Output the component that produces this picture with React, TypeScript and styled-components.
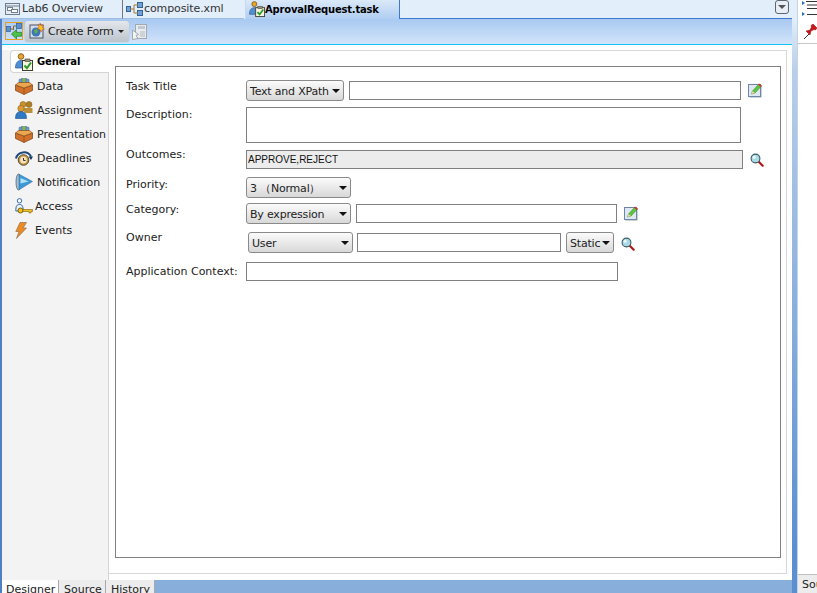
import React from "react";
import styled, { createGlobalStyle } from "styled-components";

const GlobalStyle = createGlobalStyle`
  html, body {
    margin: 0;
    padding: 0;
    background: #fff;
    overflow: hidden;
  }
  body {
    font-family: "DejaVu Sans", sans-serif;
    font-size: 11px;
    color: #111;
  }
`;

function TaskIcon() {
  return (
    <svg width="18" height="18" viewBox="0 0 18 18">
      <circle cx="6" cy="3.500" r="2.800" fill="#e8a52c" stroke="#6e4a0c" strokeWidth="0.8" />
      <path d="M0.500 15c0-5 2-7.500 5.500-7.500s5.500 2.500 5.500 7.500z" fill="#4f8fd6" stroke="#2a5a94" strokeWidth="0.7" />
      <rect x="7.500" y="7.500" width="10" height="10" fill="#f6f3df" stroke="#3f3f30" />
      <rect x="10" y="6" width="5" height="2.500" fill="#9a9680" stroke="#3f3f30" strokeWidth="0.6" />
      <path d="M9.500 12.500l2.400 2.600L16 9.500" fill="none" stroke="#2a9a2e" strokeWidth="2" />
    </svg>
  );
}

function BoxIcon() {
  return (
    <svg width="18" height="17" viewBox="0 0 18 17">
      <path d="M4 1.500l3-1v6H4z" fill="#6d9cc9" stroke="#44688c" strokeWidth="0.5" />
      <path d="M7 .5h4v6H7z" fill="#86b46e" stroke="#4e7a40" strokeWidth="0.5" />
      <path d="M11 .5l3 1v5h-3z" fill="#6d9cc9" stroke="#44688c" strokeWidth="0.5" />
      <path d="M.5 7l8.500 3 8.500-3v5.500L9 16.500.5 12.500z" fill="#d0702a" stroke="#7e3f10" strokeWidth="0.7" />
      <path d="M.5 7l3-2.500h11l3 2.500L9 10z" fill="#eca650" stroke="#7e3f10" strokeWidth="0.6" />
      <path d="M9 10v6.500" stroke="#8c4a16" strokeWidth="0.7" />
    </svg>
  );
}

function AssignIcon() {
  return (
    <svg width="18" height="18" viewBox="0 0 18 18">
      <circle cx="8" cy="3.500" r="3" fill="#c9922e" stroke="#7d5a16" strokeWidth="0.5" />
      <circle cx="14" cy="3.500" r="3" fill="#ad8028" stroke="#7d5a16" strokeWidth="0.5" />
      <path d="M7 7h10.500v5H10z" fill="#bd8e38" />
      <circle cx="6" cy="7.500" r="3.200" fill="#d99a34" stroke="#7d5a16" strokeWidth="0.5" />
      <path d="M.5 17.500c0-5 2-7 5.500-7s5.500 2 5.500 7z" fill="#2f78c4" stroke="#1c4f88" strokeWidth="0.6" />
    </svg>
  );
}

function ClockIcon() {
  return (
    <svg width="18" height="16" viewBox="0 0 18 16">
      <path d="M1 8.500a8 7.500 0 0 1 15-2" fill="none" stroke="#1f4a78" strokeWidth="2" />
      <path d="M13.500 6.500h4.500l-2 3.500z" fill="#143658" />
      <circle cx="8.500" cy="10" r="5.300" fill="#c89336" stroke="#333" strokeWidth="0.8" />
      <circle cx="8.500" cy="10" r="3.400" fill="#f3e4c0" />
      <path d="M8.500 8v2.500h2" fill="none" stroke="#333" />
    </svg>
  );
}

function SpeakerIcon() {
  return (
    <svg width="18" height="18" viewBox="0 0 18 18">
      <ellipse cx="3.500" cy="9" rx="2.500" ry="8" fill="#a8bdd0" stroke="#3f5870" strokeWidth="0.7" />
      <path d="M4 1.200L17.500 8.500 4 16.800z" fill="#3c98d8" stroke="#2a6494" strokeWidth="0.5" />
      <path d="M5.500 5l8 3.500-8 2z" fill="#b4e0f8" />
    </svg>
  );
}

function AccessIcon() {
  return (
    <svg width="18" height="17" viewBox="0 0 18 17">
      <circle cx="4.500" cy="2.800" r="2.200" fill="#fff" stroke="#3468a8" />
      <path d="M.8 13c0-5 1-6.500 3.700-6.500S8.200 8 8.200 13z" fill="#e8f0fa" stroke="#3468a8" />
      <circle cx="5.500" cy="12.500" r="2.500" fill="#f0c020" stroke="#7e6006" />
      <path d="M8 11.500h9.500v2H16v1.500h-2v-1.500H8z" fill="#f0c020" stroke="#7e6006" strokeWidth="0.6" />
    </svg>
  );
}

function BoltIcon() {
  return (
    <svg width="12" height="17" viewBox="0 0 12 17">
      <path d="M5 .5h6.500L8 6h3.500L1.500 16.500 4 9.500H.8z" fill="#ee8a22" stroke="#8f7258" strokeWidth="0.7" />
    </svg>
  );
}

function EditIcon() {
  return (
    <svg width="15" height="15" viewBox="0 0 15 15">
      <rect x="1.500" y="2.500" width="12" height="12" fill="#9aa6b4" />
      <rect x="0.500" y="1.500" width="12" height="12" fill="#dfe7f3" stroke="#6d86a8" />
      <path d="M3.500 11l1-3 6-6.500 2.500 2-6 6.500z" fill="#5cc63c" stroke="#2b7c20" strokeWidth="0.5" />
      <path d="M3.500 11l1-3 2.500 2z" fill="#ecd9a8" />
      <path d="M11 .5l3 2.300-1 1.300-2.800-2.300z" fill="#d82c2c" />
    </svg>
  );
}

function SearchIcon() {
  return (
    <svg width="14" height="14" viewBox="0 0 14 14">
      <path d="M8.500 8.500l4.200 4.200" stroke="#b01818" strokeWidth="2.200" strokeLinecap="round" />
      <circle cx="5.500" cy="5.500" r="4.400" fill="#a9dbe6" stroke="#3d5a66" strokeWidth="1.100" />
      <circle cx="4.200" cy="4.200" r="1.500" fill="#eefafc" />
    </svg>
  );
}

const navItems = [
  { label: "General", icon: <TaskIcon />, active: true },
  { label: "Data", icon: <BoxIcon /> },
  { label: "Assignment", icon: <AssignIcon /> },
  { label: "Presentation", icon: <BoxIcon /> },
  { label: "Deadlines", icon: <ClockIcon /> },
  { label: "Notification", icon: <SpeakerIcon /> },
  { label: "Access", icon: <AccessIcon />, narrow: true },
  { label: "Events", icon: <BoltIcon />, narrow: true },
];

export default function App() {
  return (
    <>
      <GlobalStyle />
      <Page>
        <Editor>
          <TabBar>
            <FileTab $width={122}>
              <svg width="15" height="14" viewBox="0 0 15 14">
                <rect x="0.500" y="1.500" width="14" height="11" fill="#e6ebf2" stroke="#6f7f90" />
                <path d="M1 4h13" stroke="#6f7f90" />
                <rect x="2.500" y="5.500" width="5" height="3" fill="#fff" stroke="#6f7f90" />
                <rect x="6.500" y="7.500" width="6" height="3" fill="#fff" stroke="#6f7f90" />
              </svg>
              Lab6 Overview
            </FileTab>
            <FileTab $width={122} $divided>
              <svg width="17" height="16" viewBox="0 0 17 16">
                <rect x="0.500" y="5.500" width="4" height="5" fill="#6da0dc" stroke="#35628f" />
                <rect x="11.500" y="1.500" width="5" height="5" fill="#6da0dc" stroke="#35628f" />
                <rect x="11.500" y="9.500" width="5" height="5" fill="#6da0dc" stroke="#35628f" />
                <path d="M4 8h4M8 4h4M8 12h4M8 4v8" stroke="#a87b2c" fill="none" />
              </svg>
              composite.xml
            </FileTab>
            <ActiveTab>
              <TaskIcon />
              AprovalRequest.task
            </ActiveTab>
            <TabSpacer />
            <TabMenu />
          </TabBar>
          <Toolbar>
            <ToolIcon>
              <svg width="16" height="16" viewBox="0 0 16 16">
                <rect x="0.500" y="3.500" width="4" height="5" fill="#5a90d4" stroke="#2d5a90" strokeWidth="0.7" />
                <rect x="10.500" y="0.500" width="5" height="5" fill="#5a90d4" stroke="#2d5a90" strokeWidth="0.7" />
                <path d="M4.500 6h3M7.500 3h3M7.500 3v4" stroke="#8a6a2c" fill="none" />
                <path d="M5.500 11l5-4.500v2.800h5v3.900h-5V16z" fill="#4fc24a" stroke="#1f7a1f" strokeWidth="0.7" />
              </svg>
            </ToolIcon>
            <CreateForm>
              <svg width="16" height="16" viewBox="0 0 16 16">
                <rect x="1" y="2" width="13" height="13" fill="#d8dee8" stroke="#4a5568" />
                <circle cx="7" cy="9" r="4.500" fill="#3b78b8" />
                <path d="M5 7l3-1 1 3-3 2z" fill="#6aa84f" />
                <path d="M11 0l1 2.500 2.500-.5-1 2.500 2 1.500-2.500 1-1 2-1-2.500-2.500-.5 1.500-2-1-2.500 2.500.5z" fill="#f5c518" stroke="#c0392b" strokeWidth="0.5" />
              </svg>
              <FormLabel>Create Form</FormLabel>
              <SmallCaret />
            </CreateForm>
            <SaveIcon>
              <svg width="16" height="17" viewBox="0 0 16 17">
                <rect x="3.500" y="1.500" width="11" height="14" fill="#e8ecf0" stroke="#a2a8ae" />
                <rect x="6" y="3" width="7" height="3" fill="#c2c8ce" />
                <path d="M.5 7l6 4.500-2.500 1 2 3-5.500 1z" fill="#f4f4f4" stroke="#a2a8ae" />
                <path d="M8 9h5M8 11h5M8 13h5" stroke="#b4bac0" />
              </svg>
            </SaveIcon>
          </Toolbar>
          <Body>
            <Card>
              <SideNav>
                {navItems.map(item => (
                  <NavItem key={item.label} $active={item.active}>
                    <NavIcon $narrow={item.narrow}>{item.icon}</NavIcon>
                    {item.label}
                  </NavItem>
                ))}
              </SideNav>
              <Content>
                <Form>
                  <Row $height={21} $after={6}>
                    <Label $top={0}>Task Title</Label>
                    <Select $width={98}>
                      Text and XPath
                      <CaretMark />
                    </Select>
                    <TextInput $width={392} $left={5} $top={1} />
                    <IconSlot $top={3}>
                      <EditIcon />
                    </IconSlot>
                  </Row>
                  <Row $height={36} $after={7}>
                    <Label $top={1}>Description:</Label>
                    <TextInput $width={495} $height={36} />
                  </Row>
                  <Row $height={19} $after={8}>
                    <Label $top={-2}>Outcomes:</Label>
                    <ReadOnlyInput>APPROVE,REJECT</ReadOnlyInput>
                    <IconSlot $top={3}>
                      <SearchIcon />
                    </IconSlot>
                  </Row>
                  <Row $height={21} $after={5}>
                    <Label $top={1}>Priority:</Label>
                    <Select $width={105}>
                      3 （Normal）
                      <CaretMark />
                    </Select>
                  </Row>
                  <Row $height={21} $after={8}>
                    <Label $top={0}>Category:</Label>
                    <Select $width={105}>
                      By expression
                      <CaretMark />
                    </Select>
                    <TextInput $width={261} $left={5} $top={1} />
                    <IconSlot $top={3}>
                      <EditIcon />
                    </IconSlot>
                  </Row>
                  <Row $height={21} $after={9}>
                    <Label $top={-1}>Owner</Label>
                    <Select $width={105} $left={2}>
                      User
                      <CaretMark />
                    </Select>
                    <TextInput $width={204} $left={4} $top={1} />
                    <Select $width={48} $left={5}>
                      Static
                      <CaretMark />
                    </Select>
                    <IconSlot $top={5}>
                      <SearchIcon />
                    </IconSlot>
                  </Row>
                  <Row $height={19} $after={0}>
                    <Label $top={3}>Application Context:</Label>
                    <TextInput $width={372} />
                  </Row>
                </Form>
              </Content>
            </Card>
          </Body>
          <BottomTabs>
            <BottomTab $width={57} $active>
              Designer
            </BottomTab>
            <BottomTab $width={47}>Source</BottomTab>
            <BottomTab $width={49}>History</BottomTab>
          </BottomTabs>
        </Editor>
        <Rail />
        <Dock>
          <DockTools>
            <svg width="15" height="17" viewBox="0 0 15 17">
              <path d="M4 1.500h11M5 5h10M5 8.500h10M5 14.500h10" stroke="#333" />
              <path d="M0 1l3 2-3 2zM0 12l3 2-3 2z" fill="#2a6fc0" />
            </svg>
            <PinSlot>
              <svg width="13" height="15" viewBox="0 0 13 15">
                <path d="M0 15l5-5" stroke="#333" />
                <path d="M2 7l4-1 1.500-3L7 1.500 9 0l4 4-1.500 2-1.500-.5-3 1.500-1 4z" fill="#c8161a" stroke="#8c0d10" strokeWidth="0.5" />
              </svg>
            </PinSlot>
          </DockTools>
          <DockSpacer />
          <DockTab>Sou</DockTab>
        </Dock>
      </Page>
    </>
  );
}

const Page = styled.div`
  display: flex;
  width: 817px;
  height: 593px;
  overflow: hidden;
  background: #fff;
`;

const Editor = styled.div`
  display: flex;
  flex-direction: column;
  width: 792px;
  height: 593px;
  flex-shrink: 0;
  box-sizing: border-box;
  border-left: 2px solid #4f7fc4;
`;

const Rail = styled.div`
  width: 5px;
  flex-shrink: 0;
  background: linear-gradient(#e2eefa 3%, #b8cfe9 12%, #5b8fd0 92%);
`;

const TabBar = styled.div`
  position: relative;
  display: flex;
  align-items: flex-start;
  height: 19px;
  flex-shrink: 0;
  margin-left: -2px;
  background: #e2eefa;
`;

const FileTab = styled.div<{ $width: number; $divided?: boolean }>`
  display: flex;
  align-items: center;
  gap: ${props => (props.$divided ? 1 : 2)}px;
  width: ${props => props.$width}px;
  height: 19px;
  padding-bottom: 1px;
  box-sizing: border-box;
  padding-left: ${props => (props.$divided ? 3 : 5)}px;
  color: #333;
  letter-spacing: -0.1px;
  border-left: ${props => (props.$divided ? "1px solid #777" : "none")};
  border-bottom: 1px solid #9dbde6;
`;

const ActiveTab = styled.div`
  display: flex;
  align-items: center;
  width: 155px;
  height: 19px;
  margin-left: 1px;
  padding-bottom: 1px;
  box-sizing: border-box;
  padding-left: 3px;
  font-size: 10px;
  font-weight: 700;
  color: #000;
  letter-spacing: -0.2px;
  background: linear-gradient(#dbe9f9, #b0cdf1);
  border-right: 1px solid #3d78d0;
  border-left: 1px solid #c4d8f0;
  svg {
    width: 16px;
    height: 16px;
  }
`;

const TabSpacer = styled.div`
  flex: 1;
  height: 19px;
  border-bottom: 1px solid #3d78d0;
  box-sizing: border-box;
`;

const TabMenu = styled.div`
  position: absolute;
  left: 775px;
  top: 0;
  width: 14px;
  height: 14px;
  box-sizing: border-box;
  border: 1px solid #5a6672;
  border-radius: 3px;
  background: #e8eef4;
  &::after {
    content: "";
    position: absolute;
    left: 2px;
    top: 4px;
    border-left: 4px solid transparent;
    border-right: 4px solid transparent;
    border-top: 4px solid #555;
  }
`;

const Toolbar = styled.div`
  display: flex;
  align-items: center;
  height: 26px;
  flex-shrink: 0;
  box-sizing: border-box;
  padding: 0 0 1px 3px;
  background: linear-gradient(#a8c9f1, #d2e4fa);
  border-bottom: 1px solid #12c4f2;
`;

const ToolIcon = styled.div`
  display: flex;
  align-items: center;
  justify-content: center;
  width: 18px;
  height: 18px;
  flex-shrink: 0;
  box-sizing: border-box;
  border: 1px solid #e8a020;
  margin-right: 2px;
`;

const CreateForm = styled.div`
  display: flex;
  align-items: center;
  width: 104px;
  height: 21px;
  flex-shrink: 0;
  box-sizing: border-box;
  padding-left: 4px;
  border-radius: 3px;
  color: #222;
  background: linear-gradient(#e4e7eb, #bcc4cc);
  box-shadow: 0 0 1px #8894a0;
`;

const FormLabel = styled.span`
  margin-left: 3px;
  margin-right: 4px;
  white-space: nowrap;
  letter-spacing: -0.2px;
`;

const SmallCaret = styled.i`
  width: 0;
  height: 0;
  border-left: 3px solid transparent;
  border-right: 3px solid transparent;
  border-top: 3px solid #222;
`;

const SaveIcon = styled.div`
  display: flex;
  margin-left: 3px;
`;

const Body = styled.div`
  flex: 1;
  min-height: 0;
  box-sizing: border-box;
  padding: 5px 5px 0 0;
  background: #fff;
`;

const Card = styled.div`
  display: flex;
  height: 100%;
`;

const SideNav = styled.div`
  display: flex;
  flex-direction: column;
  width: 107px;
  flex-shrink: 0;
  box-sizing: border-box;
  background: #f3f3f3;
  border-right: 1px solid #d4d4d4;
`;

const NavItem = styled.div<{ $active?: boolean }>`
  display: flex;
  align-items: center;
  height: 24px;
  flex-shrink: 0;
  box-sizing: border-box;
  padding-left: 13px;
  color: #222;
  ${props =>
    props.$active &&
    `
    height: 23px;
    margin: 0 -1px 1px 8px;
    padding-left: 4px;
    background: #fff;
    color: #000;
    font-size: 10px;
    font-weight: 700;
    letter-spacing: -0.1px;
    border: 1px solid #d4d4d4;
    border-right: none;
    border-radius: 4px 0 0 4px;
  `}
`;

const NavIcon = styled.span<{ $narrow?: boolean }>`
  display: flex;
  width: ${props => (props.$narrow ? 20 : 22)}px;
  flex-shrink: 0;
`;

const Content = styled.div`
  flex: 1;
  min-width: 0;
  margin-bottom: 6px;
  box-sizing: border-box;
  padding: 15px 5px 15px 6px;
  background: #fff;
  border: 1px solid #d8d8d8;
  border-left: none;
`;

const Form = styled.div`
  height: 100%;
  box-sizing: border-box;
  padding: 13px 0 0 10px;
  border: 1px solid #808080;
`;

const Row = styled.div<{ $height: number; $after: number }>`
  display: flex;
  align-items: flex-start;
  height: ${props => props.$height}px;
  margin-bottom: ${props => props.$after}px;
`;

const Label = styled.div<{ $top: number }>`
  width: 120px;
  flex-shrink: 0;
  margin-top: ${props => props.$top}px;
  line-height: 13px;
  color: #222;
  white-space: nowrap;
`;

const Select = styled.div<{ $width: number; $left?: number }>`
  display: flex;
  align-items: center;
  justify-content: space-between;
  width: ${props => props.$width}px;
  height: 21px;
  margin-left: ${props => props.$left ?? 0}px;
  flex-shrink: 0;
  box-sizing: border-box;
  padding: 1px 3px 0 3px;
  border: 1px solid #8a8a8a;
  border-radius: 3px;
  color: #222;
  letter-spacing: -0.2px;
  white-space: pre;
  background: linear-gradient(#fbfbfb, #d8d8d8);
`;

const CaretMark = styled.i`
  width: 0;
  height: 0;
  flex-shrink: 0;
  margin-top: -1px;
  border-left: 4px solid transparent;
  border-right: 4px solid transparent;
  border-top: 4px solid #111;
`;

const TextInput = styled.div<{ $width: number; $height?: number; $left?: number; $top?: number }>`
  width: ${props => props.$width}px;
  height: ${props => props.$height ?? 19}px;
  margin-left: ${props => props.$left ?? 0}px;
  margin-top: ${props => props.$top ?? 0}px;
  flex-shrink: 0;
  box-sizing: border-box;
  border: 1px solid #808080;
  background: #fff;
`;

const ReadOnlyInput = styled.div`
  display: flex;
  align-items: center;
  width: 497px;
  height: 19px;
  flex-shrink: 0;
  box-sizing: border-box;
  padding: 0 0 1px 1px;
  border: 1px solid #808080;
  background: #ececec;
  font-family: "Liberation Sans", sans-serif;
  font-size: 10px;
  color: #111;
`;

const IconSlot = styled.div<{ $top: number }>`
  display: flex;
  margin-left: 7px;
  margin-top: ${props => props.$top}px;
`;

const BottomTabs = styled.div`
  display: flex;
  align-items: flex-start;
  height: 13px;
  flex-shrink: 0;
  background: #88aedb;
`;

const BottomTab = styled.div<{ $width: number; $active?: boolean }>`
  width: ${props => props.$width}px;
  height: 13px;
  flex-shrink: 0;
  box-sizing: border-box;
  padding: 3px 0 0 ${props => (props.$active ? 4 : 5)}px;
  line-height: 13px;
  color: #222;
  background: ${props => (props.$active ? "#fff" : "#ececec")};
  border-right: 1px solid #a8a8a8;
  overflow: hidden;
`;

const Dock = styled.div`
  display: flex;
  flex-direction: column;
  flex: 1;
  min-width: 0;
  box-sizing: border-box;
  border-left: 1px solid #c4d4e8;
`;

const DockTools = styled.div`
  display: flex;
  flex-direction: column;
  height: 44px;
  flex-shrink: 0;
  box-sizing: border-box;
  padding-left: 4px;
  border-bottom: 1px solid #c8c8c8;
  background: #fff;
`;

const PinSlot = styled.div`
  display: flex;
  margin-top: 7px;
  margin-left: 2px;
`;

const DockSpacer = styled.div`
  flex: 1;
`;

const DockTab = styled.div`
  height: 19px;
  flex-shrink: 0;
  box-sizing: border-box;
  padding: 3px 0 0 4px;
  line-height: 13px;
  background: #ececec;
  border-top: 1px solid #c0c0c0;
  color: #222;
  white-space: nowrap;
  overflow: hidden;
`;
